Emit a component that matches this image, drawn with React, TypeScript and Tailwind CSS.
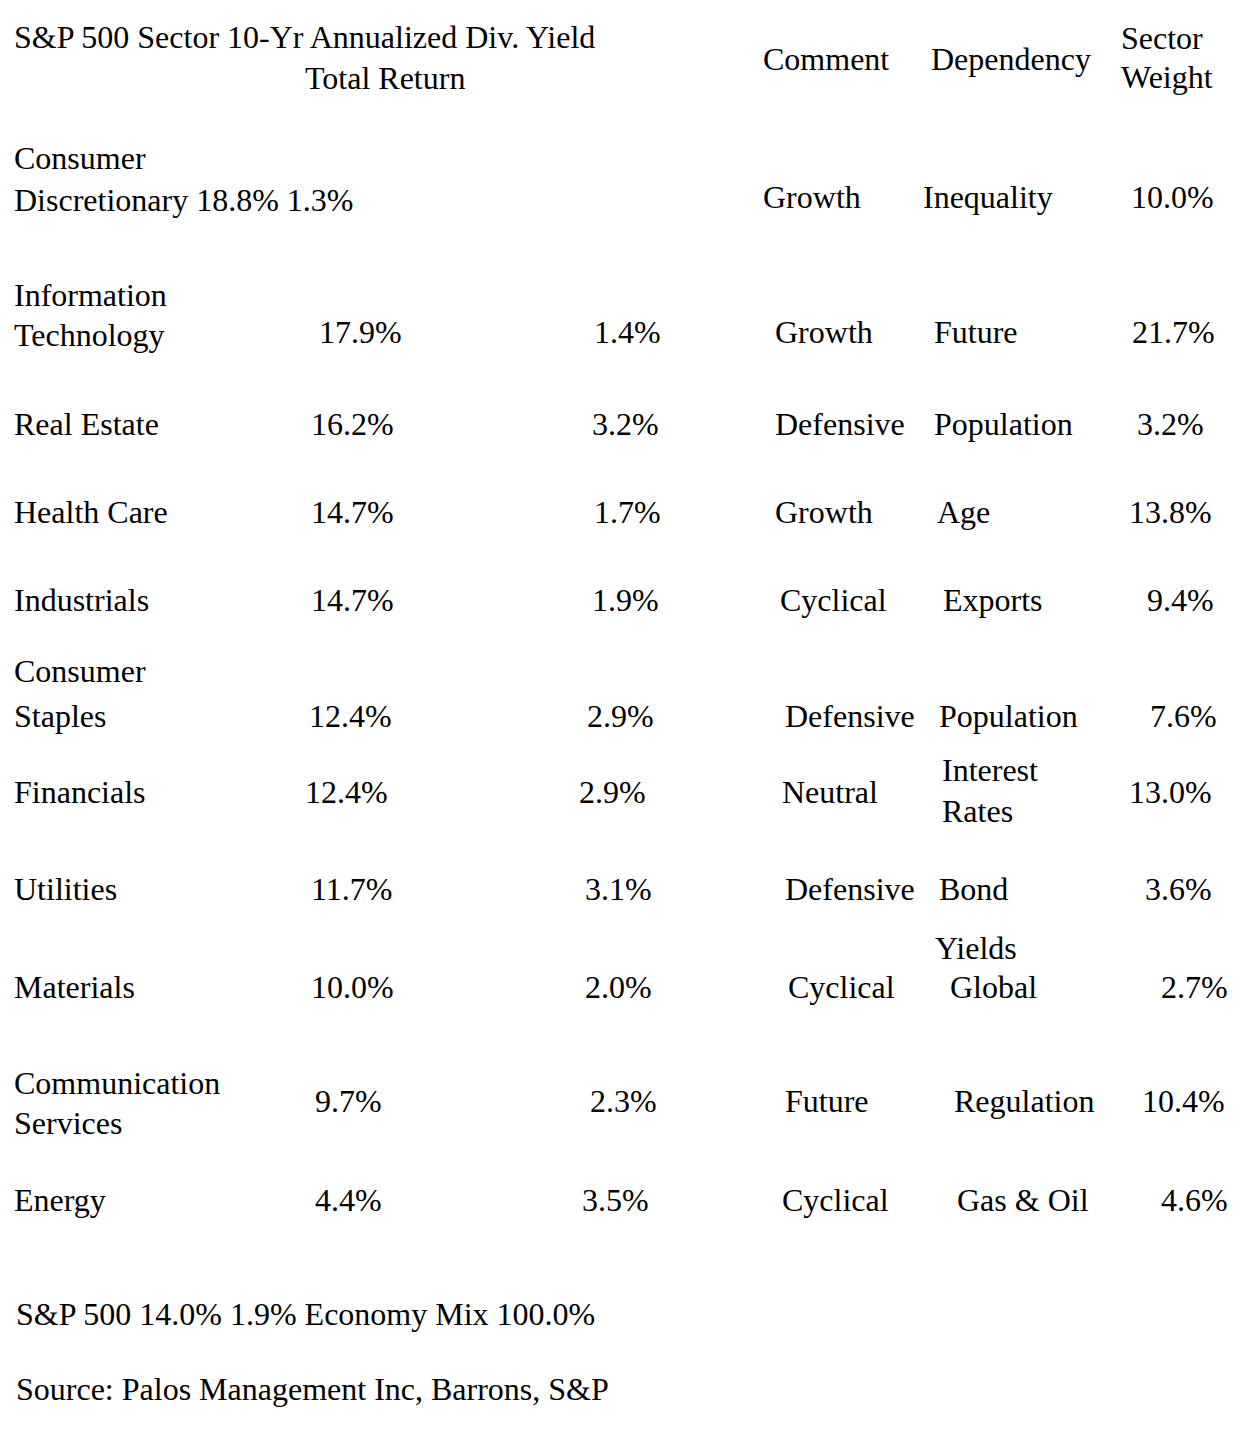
import React from "react";

type Cell = { text: string[]; cls: string };

interface SectorRow {
    h: string;
    label: Cell;
    ret?: Cell;
    div?: Cell;
    comment: Cell;
    dep: Cell;
    weight: Cell;
}

// column boxes: 14 / 294 / 564 / 754 / 915 / 1110
const rows: SectorRow[] = [
    {
        h: "h-[138px]",
        label: { text: ["Consumer", "Discretionary 18.8% 1.3%"], cls: "leading-[42px]" },
        comment: { text: ["Growth"], cls: "pl-[9px] pt-[40px]" },
        dep: { text: ["Inequality"], cls: "pl-[8px] pt-[40px]" },
        weight: { text: ["10.0%"], cls: "pl-[21px] pt-[40px]" },
    },
    {
        h: "h-[129px]",
        label: { text: ["Information", "Technology"], cls: "leading-[38px]" },
        ret: { text: ["17.9%"], cls: "pl-[25px] pt-[37px]" },
        div: { text: ["1.4%"], cls: "pl-[30px] pt-[37px]" },
        comment: { text: ["Growth"], cls: "pl-[21px] pt-[37px]" },
        dep: { text: ["Future"], cls: "pl-[19px] pt-[37px]" },
        weight: { text: ["21.7%"], cls: "pl-[22px] pt-[37px]" },
    },
    {
        h: "h-[88px]",
        label: { text: ["Real Estate"], cls: "" },
        ret: { text: ["16.2%"], cls: "pl-[17px]" },
        div: { text: ["3.2%"], cls: "pl-[28px]" },
        comment: { text: ["Defensive"], cls: "pl-[21px]" },
        dep: { text: ["Population"], cls: "pl-[19px]" },
        weight: { text: ["3.2%"], cls: "pl-[27px]" },
    },
    {
        h: "h-[88px]",
        label: { text: ["Health Care"], cls: "" },
        ret: { text: ["14.7%"], cls: "pl-[17px]" },
        div: { text: ["1.7%"], cls: "pl-[30px]" },
        comment: { text: ["Growth"], cls: "pl-[21px]" },
        dep: { text: ["Age"], cls: "pl-[22px]" },
        weight: { text: ["13.8%"], cls: "pl-[19px]" },
    },
    {
        h: "h-[69px]",
        label: { text: ["Industrials"], cls: "" },
        ret: { text: ["14.7%"], cls: "pl-[17px]" },
        div: { text: ["1.9%"], cls: "pl-[28px]" },
        comment: { text: ["Cyclical"], cls: "pl-[26px]" },
        dep: { text: ["Exports"], cls: "pl-[28px]" },
        weight: { text: ["9.4%"], cls: "pl-[37px]" },
    },
    {
        h: "h-[101px]",
        label: { text: ["Consumer", "Staples"], cls: "leading-[45px]" },
        ret: { text: ["12.4%"], cls: "pl-[15px] pt-[47px]" },
        div: { text: ["2.9%"], cls: "pl-[23px] pt-[47px]" },
        comment: { text: ["Defensive"], cls: "pl-[31px] pt-[47px]" },
        dep: { text: ["Population"], cls: "pl-[24px] pt-[47px]" },
        weight: { text: ["7.6%"], cls: "pl-[40px] pt-[47px]" },
    },
    {
        h: "h-[119px]",
        label: { text: ["Financials"], cls: "pt-[22px]" },
        ret: { text: ["12.4%"], cls: "pl-[11px] pt-[22px]" },
        div: { text: ["2.9%"], cls: "pl-[15px] pt-[22px]" },
        comment: { text: ["Neutral"], cls: "pl-[28px] pt-[22px]" },
        dep: { text: ["Interest", "Rates"], cls: "pl-[27px] leading-[41px]" },
        weight: { text: ["13.0%"], cls: "pl-[19px] pt-[22px]" },
    },
    {
        h: "h-[60px]",
        label: { text: ["Utilities"], cls: "" },
        ret: { text: ["11.7%"], cls: "pl-[17px]" },
        div: { text: ["3.1%"], cls: "pl-[21px]" },
        comment: { text: ["Defensive"], cls: "pl-[31px]" },
        dep: { text: ["Bond"], cls: "pl-[24px]" },
        weight: { text: ["3.6%"], cls: "pl-[35px]" },
    },
    {
        h: "h-[134px]",
        label: { text: ["Materials"], cls: "pt-[38px]" },
        ret: { text: ["10.0%"], cls: "pl-[17px] pt-[38px]" },
        div: { text: ["2.0%"], cls: "pl-[21px] pt-[38px]" },
        comment: { text: ["Cyclical"], cls: "pl-[34px] pt-[38px]" },
        dep: { text: [], cls: "" },
        weight: { text: ["2.7%"], cls: "pl-[51px] pt-[38px]" },
    },
    {
        h: "h-[117px]",
        label: { text: ["Communication", "Services"], cls: "leading-[38px]" },
        ret: { text: ["9.7%"], cls: "pl-[21px] pt-[18px]" },
        div: { text: ["2.3%"], cls: "pl-[26px] pt-[18px]" },
        comment: { text: ["Future"], cls: "pl-[31px] pt-[18px]" },
        dep: { text: ["Regulation"], cls: "pl-[39px] pt-[18px]" },
        weight: { text: ["10.4%"], cls: "pl-[32px] pt-[18px]" },
    },
    {
        h: "h-[114px]",
        label: { text: ["Energy"], cls: "" },
        ret: { text: ["4.4%"], cls: "pl-[21px]" },
        div: { text: ["3.5%"], cls: "pl-[18px]" },
        comment: { text: ["Cyclical"], cls: "pl-[28px]" },
        dep: { text: ["Gas & Oil"], cls: "pl-[42px]" },
        weight: { text: ["4.6%"], cls: "pl-[51px]" },
    },
];

const CellBox = ({ cell, w }: { cell?: Cell; w: string }) => (
    <div className={`${w} shrink-0 whitespace-nowrap leading-[40px] ${cell?.cls ?? ""}`}>
        {cell?.text.map((t) => (
            <div key={t}>{t}</div>
        ))}
    </div>
);

export default function App() {
    return (
        <div className="w-[1260px] min-h-[1438px] bg-white text-black font-['Liberation_Serif','Times_New_Roman',serif] text-[32px]">
            <div className="pl-[14px] pt-[17px]">
                {/* Header */}
                <div className="flex items-start h-[120px]">
                    <div className="w-[749px] shrink-0 whitespace-nowrap leading-[41px]">
                        <div>S&amp;P 500 Sector 10-Yr Annualized Div. Yield</div>
                        <div className="pl-[291px]">Total Return</div>
                    </div>
                    <div className="w-[152px] shrink-0 whitespace-nowrap leading-[40px] pt-[22px]">Comment</div>
                    <div className="w-[195px] shrink-0 whitespace-nowrap leading-[40px] pt-[22px] pl-[16px]">Dependency</div>
                    <div className="whitespace-nowrap leading-[39px] pt-[2px] pl-[11px]">
                        <div>Sector</div>
                        <div>Weight</div>
                    </div>
                </div>

                {/* Sector rows */}
                {rows.map((r) => (
                    <div key={r.label.text.join(" ")} className={`flex items-start ${r.h}`}>
                        <CellBox cell={r.label} w="w-[280px]" />
                        <CellBox cell={r.ret} w="w-[270px]" />
                        <CellBox cell={r.div} w="w-[190px]" />
                        <CellBox cell={r.comment} w="w-[161px]" />
                        {r.label.text[0] === "Materials" ? (
                            <div className="w-[195px] shrink-0 whitespace-nowrap leading-[39px]">
                                <div className="pl-[20px]">Yields</div>
                                <div className="pl-[35px]">Global</div>
                            </div>
                        ) : (
                            <CellBox cell={r.dep} w="w-[195px]" />
                        )}
                        <CellBox cell={r.weight} w="w-[150px]" />
                    </div>
                ))}

                {/* Footer */}
                <div className="pl-[2px] leading-[40px] whitespace-nowrap">
                    S&amp;P 500 14.0% 1.9% Economy Mix 100.0%
                </div>
                <div className="pl-[2px] mt-[35px] leading-[40px] whitespace-nowrap">
                    Source: Palos Management Inc, Barrons, S&amp;P
                </div>
            </div>
        </div>
    );
}
